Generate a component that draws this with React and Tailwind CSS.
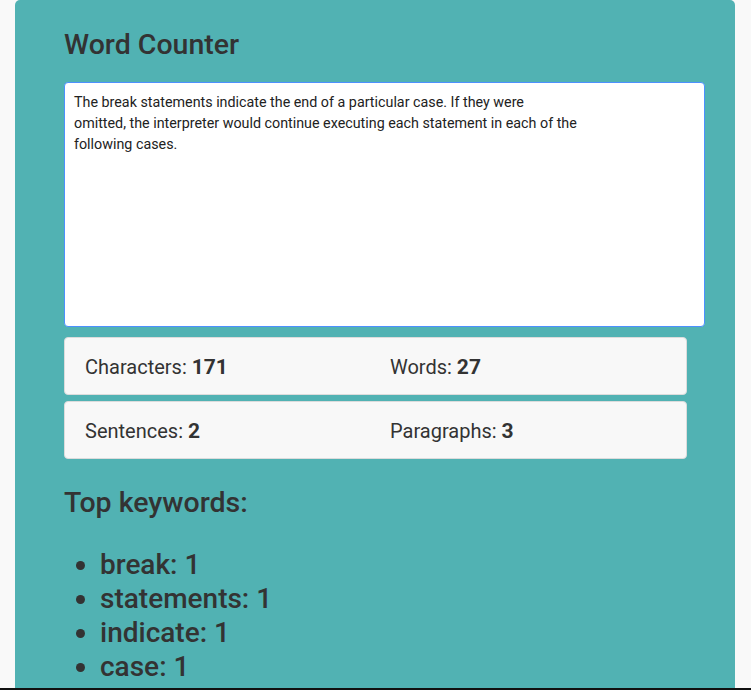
import React, { useState } from 'react';

const initialText =
  'The break statements indicate the end of a particular case. If they were\nomitted, the interpreter would continue executing each statement in each of the\nfollowing cases.';

const StatCard = ({ left, right }) => (
  <div className="flex items-center w-[623px] h-[58px] px-[20px] pt-[4px] bg-[#f8f8f8] border border-[#dcdcdc] rounded-[4px]">
    <div className="w-[305px] text-[20px]">
      {left.label}: <span className="text-[21px] font-bold">{left.value}</span>
    </div>
    <div className="text-[20px]">
      {right.label}: <span className="text-[21px] font-bold">{right.value}</span>
    </div>
  </div>
);

const App = () => {
  const [text, setText] = useState(initialText);
  const keywords = [
    ['break', 1],
    ['statements', 1],
    ['indicate', 1],
    ['case', 1],
  ];

  return (
    <div className="h-[690px] flex flex-col bg-[#f9f9f9] font-['Roboto',sans-serif] text-[#333]">
      <div className="flex-1 overflow-hidden">
        <div className="ml-[15px] w-[720px] min-h-[700px] bg-[#51b2b3] rounded-[5px] pl-[49px] pt-[28px]">
          <h1 className="text-[28.5px] font-medium leading-[34px] mb-[20px]">Word Counter</h1>
          <textarea
            value={text}
            onChange={(e) => setText(e.target.value)}
            className="block w-[641px] h-[245px] px-[9px] py-[9px] bg-white border border-[#4d90fe] rounded-[4px] text-[14.3px] leading-[21px] text-[#222] resize-none outline-none"
          />
          <div className="flex flex-col gap-[6px] mt-[10px]">
            <StatCard left={{ label: 'Characters', value: 171 }} right={{ label: 'Words', value: 27 }} />
            <StatCard left={{ label: 'Sentences', value: 2 }} right={{ label: 'Paragraphs', value: 3 }} />
          </div>
          <h2 className="text-[28.5px] font-medium leading-[36px] mt-[26px]">Top keywords:</h2>
          <ul className="list-disc pl-[36px] mt-[27px] text-[28px] font-medium leading-[34px]">
            {keywords.map(([word, count]) => (
              <li key={word}>
                {word}: {count}
              </li>
            ))}
          </ul>
        </div>
      </div>
      <div className="h-[2px] bg-[#111]" />
    </div>
  );
};

export default App;
